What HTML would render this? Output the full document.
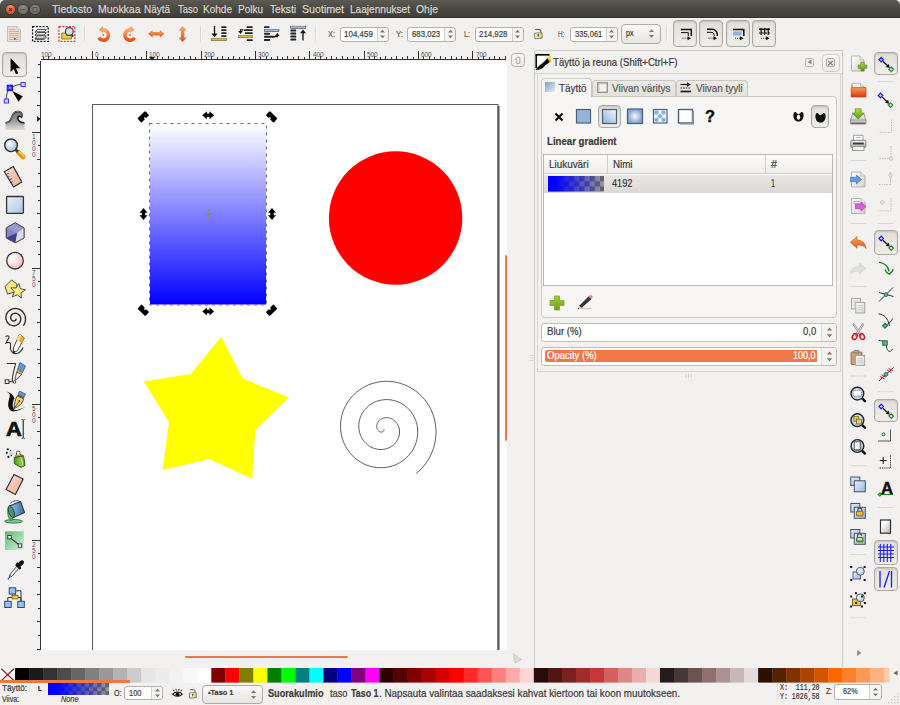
<!DOCTYPE html>
<html><head><meta charset="utf-8"><title>Inkscape</title>
<style>
*{box-sizing:border-box;margin:0;padding:0}
html,body{width:900px;height:705px;overflow:hidden;background:#f2f1f0;font-family:"Liberation Sans","DejaVu Sans",sans-serif;font-size:11px;color:#3c3b37}
.a{position:absolute}
#title{left:0;top:0;width:900px;height:18px;background:linear-gradient(#5b5952,#4a4843 50%,#403f3a 92%,#2f2e2b);border-radius:5px 5px 0 0}
.t{position:absolute;white-space:nowrap;transform-origin:0 0;display:block;-webkit-text-stroke-width:0.2px}
.wb{position:absolute;top:4.6px;width:9.8px;height:9.8px;border-radius:50%;box-shadow:0 0 0 0.7px rgba(40,38,34,.6)}
#canvas{left:41px;top:61px;width:466px;height:589px;background:#fff;overflow:hidden}
.lbl{position:absolute;white-space:nowrap}
.spin{position:absolute;background:#fff;border:1px solid #b5b1a9;border-radius:3px}
.spin span{position:absolute;left:4px;top:2px;font-size:9px;color:#3c3b37;letter-spacing:-0.3px}
.spin i{position:absolute;right:0;top:0;bottom:0;width:11px;border-left:1px solid #d5d2cc;background:#f5f4f2;border-radius:0 3px 3px 0}
.btn{position:absolute;border:1px solid #b0aca4;border-radius:4px;background:linear-gradient(#fbfbfa,#e6e4e1)}
.btnp{position:absolute;border:1px solid #aeaaa2;border-radius:4px;background:linear-gradient(#e2dfdb,#efeeeb);box-shadow:inset 0 1px 2px rgba(0,0,0,.15)}
.rl{position:absolute;font-size:6.5px;line-height:7px;color:#505060;letter-spacing:-0.1px}
.spin i svg{position:absolute;left:50%;top:50%;margin:-5px 0 0 -3.5px}
</style></head><body>
<!-- TITLE/MENU -->
<div id="title" class="a">
<div class="wb" style="left:5.6px;background:radial-gradient(circle at 50% 25%,#f79472,#e9562a 65%,#d94c22)"></div>
<div class="wb" style="left:17.8px;background:radial-gradient(circle at 50% 25%,#8d8b84,#6f6d67 70%)"></div>
<div class="wb" style="left:30.1px;background:radial-gradient(circle at 50% 25%,#8d8b84,#6f6d67 70%)"></div>
<svg class="a" style="left:0;top:0" width="45" height="18"><path d="M9 8L12 11M12 8L9 11" stroke="#5a2a18" stroke-width="1.1"/><path d="M20.7 9.6H24.7" stroke="#55534e" stroke-width="1.1"/><rect x="33" y="7.5" width="4" height="4" fill="none" stroke="#55534e" stroke-width="1.1"/></svg>
<span class="t" style="left:52.0px;top:4.3px;font-size:11.5px;line-height:11.5px;color:#dfdbd2;text-shadow:0 0 1px rgba(0,0,0,.5);-webkit-text-stroke:0.25px #dfdbd2;transform:scaleX(0.916);">Tiedosto</span><span class="t" style="left:97.5px;top:4.3px;font-size:11.5px;line-height:11.5px;color:#dfdbd2;text-shadow:0 0 1px rgba(0,0,0,.5);-webkit-text-stroke:0.25px #dfdbd2;transform:scaleX(0.911);">Muokkaa</span><span class="t" style="left:144.0px;top:4.3px;font-size:11.5px;line-height:11.5px;color:#dfdbd2;text-shadow:0 0 1px rgba(0,0,0,.5);-webkit-text-stroke:0.25px #dfdbd2;transform:scaleX(0.865);">Näytä</span><span class="t" style="left:177.5px;top:4.3px;font-size:11.5px;line-height:11.5px;color:#dfdbd2;text-shadow:0 0 1px rgba(0,0,0,.5);-webkit-text-stroke:0.25px #dfdbd2;transform:scaleX(0.823);">Taso</span><span class="t" style="left:203.0px;top:4.3px;font-size:11.5px;line-height:11.5px;color:#dfdbd2;text-shadow:0 0 1px rgba(0,0,0,.5);-webkit-text-stroke:0.25px #dfdbd2;transform:scaleX(0.872);">Kohde</span><span class="t" style="left:238.0px;top:4.3px;font-size:11.5px;line-height:11.5px;color:#dfdbd2;text-shadow:0 0 1px rgba(0,0,0,.5);-webkit-text-stroke:0.25px #dfdbd2;transform:scaleX(0.869);">Polku</span><span class="t" style="left:270.0px;top:4.3px;font-size:11.5px;line-height:11.5px;color:#dfdbd2;text-shadow:0 0 1px rgba(0,0,0,.5);-webkit-text-stroke:0.25px #dfdbd2;transform:scaleX(0.884);">Teksti</span><span class="t" style="left:302.0px;top:4.3px;font-size:11.5px;line-height:11.5px;color:#dfdbd2;text-shadow:0 0 1px rgba(0,0,0,.5);-webkit-text-stroke:0.25px #dfdbd2;transform:scaleX(0.925);">Suotimet</span><span class="t" style="left:350.0px;top:4.3px;font-size:11.5px;line-height:11.5px;color:#dfdbd2;text-shadow:0 0 1px rgba(0,0,0,.5);-webkit-text-stroke:0.25px #dfdbd2;transform:scaleX(0.877);">Laajennukset</span><span class="t" style="left:416.0px;top:4.3px;font-size:11.5px;line-height:11.5px;color:#dfdbd2;text-shadow:0 0 1px rgba(0,0,0,.5);-webkit-text-stroke:0.25px #dfdbd2;transform:scaleX(0.905);">Ohje</span>
</div>
<!-- TOOLBAR -->
<svg class="a" style="left:0px;top:18px" width="900" height="32" viewBox="0 18 900 32" ><defs><linearGradient id="og" x1="0" y1="0" x2="0" y2="1"><stop offset="0" stop-color="#f8a868"/><stop offset="1" stop-color="#e2551b"/></linearGradient><linearGradient id="blg" x1="0" y1="0" x2="0" y2="1"><stop offset="0" stop-color="#cfdcec"/><stop offset="1" stop-color="#7f9dc0"/></linearGradient><linearGradient id="ylg" x1="0" y1="0" x2="0" y2="1"><stop offset="0" stop-color="#f0d060"/><stop offset="1" stop-color="#c8a030"/></linearGradient></defs><path d="M7.5 26.5H17L20.5 30V41.5H7.5Z" fill="#ecdcd5" stroke="#c4c1bc" stroke-width="1"/><path d="M17 26.5V30H20.5Z" fill="#f6f5f3" stroke="#c4c1bc" stroke-width="0.8"/><path d="M9 29.5h6.5M9 31.5h10M9 33.5h10M9 35.5h10M9 37.5h10M9 39.5h10" stroke="#d3b0a2" stroke-width="1"/><rect x="14" y="38" width="1.6" height="2" fill="#7a6a65"/><rect x="32.6" y="26.6" width="15.6" height="14.8" fill="#fff" stroke="#111" stroke-width="1.3" stroke-dasharray="2 1.3"/><path d="M35.3 38.2L37.3 35.8H46.3L44.3 38.2ZM35.3 35L37.3 32.6H46.3L44.3 35ZM35.3 31.8L37.3 29.4H46.3L44.3 31.8Z" fill="#fff" stroke="#222" stroke-width="0.85" stroke-linejoin="round"/><path d="M35.3 38.2V39.4H44.3L46.3 37M35.3 35V36M35.3 31.8V32.8" stroke="#222" stroke-width="0.8" fill="none"/><rect x="59" y="26.6" width="15.8" height="14.8" fill="#fff" stroke="#e0353a" stroke-width="1.3" stroke-dasharray="2 1.3"/><path d="M61.7 33H66.5V35.5H71.5V39H61.7Z" fill="#f2cc3a" stroke="#7a6c44" stroke-width="0.9"/><path d="M71.5 34.5L73.3 36.6" stroke="#333" stroke-width="1.8"/><circle cx="69.3" cy="31.5" r="3.9" fill="#cfe0f0" stroke="#444" stroke-width="1.3"/><path d="M84.5 25V41" stroke="#dcd9d5" stroke-width="1"/><path d="M85.5 25V41" stroke="#fbfaf9" stroke-width="1"/><path d="M200.5 25V41" stroke="#dcd9d5" stroke-width="1"/><path d="M201.5 25V41" stroke="#fbfaf9" stroke-width="1"/><path d="M315.5 25V41" stroke="#dcd9d5" stroke-width="1"/><path d="M316.5 25V41" stroke="#fbfaf9" stroke-width="1"/><path d="M666.5 25V41" stroke="#dcd9d5" stroke-width="1"/><path d="M667.5 25V41" stroke="#fbfaf9" stroke-width="1"/><g transform="translate(103.3 35.0) scale(1 1)"><path d="M-0.53 -5.07A5.1 5.1 0 1 1 -4.42 2.55" fill="none" stroke="url(#og)" stroke-width="3.6"/><path d="M-0.3 -9L-4.6 -5.2L-0.3 -2Z" fill="#f6a362"/><circle cx="0" cy="0.1" r="1.05" fill="#ee7a3a"/></g><g transform="translate(130.0 35.0) scale(-1 1)"><path d="M-0.53 -5.07A5.1 5.1 0 1 1 -4.42 2.55" fill="none" stroke="url(#og)" stroke-width="3.6"/><path d="M-0.3 -9L-4.6 -5.2L-0.3 -2Z" fill="#f6a362"/><circle cx="0" cy="0.1" r="1.05" fill="#ee7a3a"/></g><path d="M148 33.7L152.6 29.8V32H159.8V29.8L164.4 33.7L159.8 37.6V35.4H152.6V37.6Z" fill="url(#og)"/><path d="M182.6 26L186.6 30.6H184.3V37.4H186.6L182.6 42L178.6 37.4H180.9V30.6H178.6Z" fill="url(#og)"/><path d="M214.5 26V35" stroke="#111" stroke-width="1.3"/><path d="M211.5 33.5H217.5L214.5 37.2Z" fill="#111"/><rect x="221.3" y="26.2" width="5.2" height="1.9" rx="0.6" fill="#222"/><rect x="221.3" y="29.2" width="5.2" height="1.9" rx="0.6" fill="#222"/><rect x="221.3" y="32.2" width="5.2" height="1.9" rx="0.6" fill="#222"/><rect x="221.3" y="35.2" width="5.2" height="1.9" rx="0.6" fill="#222"/><rect x="211.5" y="38.3" width="15" height="2.4" fill="url(#ylg)" stroke="#7a6a30" stroke-width="0.6"/><rect x="246.7" y="26.2" width="6.0" height="1.9" rx="0.6" fill="#222"/><rect x="244" y="29.2" width="8.699999999999989" height="1.9" rx="0.6" fill="#222"/><rect x="246.7" y="39.2" width="6.0" height="1.9" rx="0.6" fill="#222"/><rect x="245" y="32.2" width="7.7" height="1.9" rx="0.6" fill="#222"/><rect x="238.3" y="35.3" width="14.2" height="2.4" fill="url(#ylg)" stroke="#7a6a30" stroke-width="0.6"/><path d="M243.5 29.8H240.5V32" stroke="#111" stroke-width="1.2" fill="none"/><path d="M238.2 31H242.8L240.5 34Z" fill="#111"/><rect x="264" y="26.2" width="5.5" height="1.9" rx="0.6" fill="#222"/><rect x="264.3" y="29.3" width="14.7" height="2.4" fill="url(#blg)" stroke="#44546a" stroke-width="0.6"/><rect x="264" y="32.8" width="6" height="1.9" rx="0.6" fill="#222"/><rect x="264" y="35.8" width="11" height="1.9" rx="0.6" fill="#222"/><rect x="264" y="39" width="6" height="1.9" rx="0.6" fill="#222"/><path d="M275 36.7H277.3V35" stroke="#111" stroke-width="1.2" fill="none"/><path d="M275 36H279.6L277.3 33Z" fill="#111"/><rect x="290.6" y="26.2" width="15.2" height="2.3" fill="url(#blg)" stroke="#44546a" stroke-width="0.6"/><rect x="290.4" y="29.6" width="5.8" height="1.9" rx="0.6" fill="#222"/><rect x="290.4" y="32.6" width="5.8" height="1.9" rx="0.6" fill="#222"/><rect x="290.4" y="35.6" width="5.8" height="1.9" rx="0.6" fill="#222"/><rect x="290.4" y="38.6" width="5.8" height="1.9" rx="0.6" fill="#222"/><path d="M303 32V40.6" stroke="#111" stroke-width="1.3"/><path d="M300 33.2H306L303 29.6Z" fill="#111"/><defs><linearGradient id="lkg" x1="0" y1="0" x2="1" y2="0.4"><stop offset="0.2" stop-color="#ffffff"/><stop offset="1" stop-color="#e8d048"/></linearGradient></defs><path d="M535.3 29.5H539.3C540.6 29.5 541 31 541 32.8" fill="none" stroke="#555" stroke-width="1.1"/><path d="M534.5 33.2L542 32.8L542.2 38.2L534.8 38.8Z" fill="url(#lkg)" stroke="#777" stroke-width="0.9" stroke-linejoin="round"/><path d="M537.4 34.3H539L538.5 36.8H537.9Z" fill="#333"/></svg>
<span class="t" style="left:328.0px;top:29.5px;font-size:9px;line-height:9px;color:#6a6965;transform:scaleX(0.822);">X:</span>
<div class="spin" style="left:340px;top:26.5px;width:48.5px;height:15.5px"><i style="width:11px"><svg width="7" height="10" viewBox="0 0 7 10"><path d="M1 3.6L3.5 0.8L6 3.6ZM1 6.4L3.5 9.2L6 6.4Z" fill="#7a7873"/></svg></i></div><span class="t" style="left:344.4px;top:29.7px;font-size:9px;line-height:9px;color:#3c3b37;transform:scaleX(0.888);">104,459</span>
<span class="t" style="left:396.0px;top:29.5px;font-size:9px;line-height:9px;color:#6a6965;transform:scaleX(0.873);">Y:</span>
<div class="spin" style="left:407px;top:26.5px;width:49px;height:15.5px"><i style="width:11px"><svg width="7" height="10" viewBox="0 0 7 10"><path d="M1 3.6L3.5 0.8L6 3.6ZM1 6.4L3.5 9.2L6 6.4Z" fill="#7a7873"/></svg></i></div><span class="t" style="left:411.8px;top:29.7px;font-size:9px;line-height:9px;color:#3c3b37;transform:scaleX(0.866);">683,023</span>
<span class="t" style="left:464.0px;top:29.5px;font-size:9px;line-height:9px;color:#6a6965;transform:scaleX(0.798);">L:</span>
<div class="spin" style="left:475px;top:26.5px;width:48.5px;height:15.5px"><i style="width:11px"><svg width="7" height="10" viewBox="0 0 7 10"><path d="M1 3.6L3.5 0.8L6 3.6ZM1 6.4L3.5 9.2L6 6.4Z" fill="#7a7873"/></svg></i></div><span class="t" style="left:479.3px;top:29.7px;font-size:9px;line-height:9px;color:#3c3b37;transform:scaleX(0.876);">214,928</span>
<span class="t" style="left:558.0px;top:29.5px;font-size:9px;line-height:9px;color:#6a6965;transform:scaleX(0.722);">H:</span>
<div class="spin" style="left:570px;top:26.5px;width:47.5px;height:15.5px"><i style="width:11px"><svg width="7" height="10" viewBox="0 0 7 10"><path d="M1 3.6L3.5 0.8L6 3.6ZM1 6.4L3.5 9.2L6 6.4Z" fill="#7a7873"/></svg></i></div><span class="t" style="left:574.7px;top:29.7px;font-size:9px;line-height:9px;color:#3c3b37;transform:scaleX(0.839);">335,061</span>
<div class="btn" style="left:621px;top:24px;width:40px;height:19.5px"></div>
<span class="t" style="left:626.0px;top:29.0px;font-size:9px;line-height:9px;color:#3c3b37;transform:scaleX(0.788);">px</span>
<svg class="a" style="left:648px;top:28.3px" width="7" height="11" viewBox="0 0 7 11" ><path d="M1 4L3.5 1.2L6 4ZM1 7L3.5 9.8L6 7Z" fill="#7a7873"/></svg>
<div class="btnp" style="left:673.3px;top:20.3px;width:24px;height:27px"></div>
<div class="btnp" style="left:699.4px;top:20.3px;width:24px;height:27px"></div>
<div class="btnp" style="left:725.7px;top:20.3px;width:24px;height:27px"></div>
<div class="btnp" style="left:752px;top:20.3px;width:24px;height:27px"></div>
<svg class="a" style="left:660px;top:18px" width="130" height="32" viewBox="660 18 130 32" ><path d="M681 29.6H691.3V36" fill="none" stroke="#111" stroke-width="1.5"/><path d="M681 32.6H688.3V36" fill="none" stroke="#111" stroke-width="1"/><path d="M682.5 38.2h5" stroke="#333" stroke-width="1" stroke-dasharray="1 1"/><path d="M687.5 36.2L691.1 38.2L687.5 40.2Z" fill="#111"/><path d="M707 29.3H712A5 5 0 0 1 717.2 34.5V36" fill="none" stroke="#111" stroke-width="1.5"/><path d="M707 32.3H711A3 3 0 0 1 714.2 35.3V36.2" fill="none" stroke="#111" stroke-width="1"/><path d="M708.5 38.2h5" stroke="#333" stroke-width="1" stroke-dasharray="1 1"/><path d="M713.5 36.2L717.1 38.2L713.5 40.2Z" fill="#111"/><path d="M733 29.6H743.8V36" fill="none" stroke="#111" stroke-width="1.5"/><rect x="733" y="31.5" width="8.5" height="4" fill="#8fb2dc"/><path d="M735 38.2h5" stroke="#333" stroke-width="1" stroke-dasharray="1 1"/><path d="M740 36.2L743.6 38.2L740 40.2Z" fill="#111"/><path d="M759 29.3H770" stroke="#111" stroke-width="1.6"/><path d="M759 33H770" stroke="#111" stroke-width="1.2" stroke-dasharray="2 1"/><path d="M761.2 28V35M764.7 28V35M768.2 28V35" stroke="#111" stroke-width="1.2"/><path d="M761 38.2h5" stroke="#333" stroke-width="1" stroke-dasharray="1 1"/><path d="M766 36.2L769.6 38.2L766 40.2Z" fill="#111"/></svg>
<!-- TOOLBOX -->
<div class="btnp" style="left:2.2px;top:51.8px;width:25.3px;height:25.4px"></div>
<svg class="a" style="left:0px;top:50px" width="31" height="600" viewBox="0 50 31 600" ><defs><linearGradient id="tw" x1="0" y1="0" x2="0" y2="1"><stop offset="0" stop-color="#707070"/><stop offset="0.5" stop-color="#9a9a9a"/><stop offset="1" stop-color="#dedede"/></linearGradient><radialGradient id="tlens" cx="0.4" cy="0.35"><stop offset="0" stop-color="#ffffff"/><stop offset="1" stop-color="#b4cbe6"/></radialGradient><linearGradient id="trect" x1="0" y1="0" x2="1" y2="1"><stop offset="0" stop-color="#eef3f9"/><stop offset="1" stop-color="#a9c3df"/></linearGradient><radialGradient id="tell" cx="0.35" cy="0.35" r="0.75"><stop offset="0" stop-color="#ffffff"/><stop offset="0.4" stop-color="#fde8ea"/><stop offset="1" stop-color="#f7b0ba"/></radialGradient><linearGradient id="tpink" x1="0" y1="0" x2="1" y2="1"><stop offset="0" stop-color="#fbe0d6"/><stop offset="1" stop-color="#f0a890"/></linearGradient><linearGradient id="tgrad" x1="0" y1="0" x2="1" y2="1"><stop offset="0" stop-color="#5cb86e"/><stop offset="1" stop-color="#d8f2de"/></linearGradient><linearGradient id="tcan" x1="0" y1="0" x2="1" y2="0"><stop offset="0" stop-color="#4a9a1c"/><stop offset="0.6" stop-color="#8ccc48"/><stop offset="1" stop-color="#5aa828"/></linearGradient><linearGradient id="tbuck" x1="0" y1="0" x2="1" y2="0"><stop offset="0" stop-color="#9cc4e8"/><stop offset="1" stop-color="#3a6a9c"/></linearGradient></defs><path d="M10.6 58.2V72L13.7 69L16 74.2L18.2 73.2L16 68.2H20.3Z" fill="#000"/><path d="M6.3 99C6.5 93 8 90 10 88M12.5 87C15 85.3 18 84.6 21 84.5" fill="none" stroke="#444" stroke-width="1"/><rect x="7.3" y="85.3" width="5.2" height="5.2" fill="#2a2aff" stroke="#1a1aff" stroke-width="1.2"/><rect x="8.7" y="86.7" width="2.4" height="2.4" fill="#8a8aff"/><rect x="21" y="82.5" width="4.2" height="4" fill="#d0d0ff" stroke="#3a3aff" stroke-width="1"/><rect x="4.3" y="99" width="4.2" height="4" fill="#d0d0ff" stroke="#3a3aff" stroke-width="1"/><path d="M12.3 91L22.7 96.3L18.5 101.8Z" fill="#000"/><path d="M5.5 123C9 122.5 11 120 12 116.5C13.2 112.5 16 111 19 111.5C22 112 23.3 115 21.5 117.3C20.5 116 18.8 115.8 18 117C17 119.5 19 122.5 24.5 123V130H5.5Z" fill="url(#tw)"/><path d="M5.5 123C9 122.5 11 120 12 116.5C13.2 112.5 16 111 19 111.5C22 112 23.3 115 21.5 117.3C20.5 116 18.8 115.8 18 117C17 119.5 19 122.5 24.5 123" fill="none" stroke="#111" stroke-width="1.5"/><path d="M5.5 123C9 122.5 11 120 12 116.5C13.2 112.5 16 111 19 111.5C22 112 23.3 115 21.5 117.3" fill="none" stroke="#eee" stroke-width="0.5"/><path d="M18.3 152.3L23.3 157" stroke="#e8930c" stroke-width="4.6" stroke-linecap="round"/><path d="M19 151.6L24 156.2" stroke="#fbd467" stroke-width="1.4" stroke-linecap="round"/><path d="M15 149L18 151.8" stroke="#444" stroke-width="3"/><circle cx="11" cy="145.3" r="6.3" fill="url(#tlens)" stroke="#333" stroke-width="1.4"/><path d="M4.3 171.7L13.3 166.6L21.8 182L13.6 187Z" fill="url(#tpink)" stroke="#333" stroke-width="1.2" stroke-linejoin="round"/><path d="M6.2 174.6L8.8 173.2M7.7 177.3L9.5 176.3M9.2 180L11.8 178.6M10.7 182.7L12.5 181.7" stroke="#333" stroke-width="0.9"/><rect x="6.6" y="196.5" width="16.8" height="16.8" rx="0.8" fill="url(#trect)" stroke="#333" stroke-width="1.3"/><path d="M15.3 222.8L24 227.9V238L15.3 242.7L6.3 238V227.9Z" fill="#8484c4" stroke="#555" stroke-width="1"/><path d="M15.3 222.8L24 227.9L17 233L6.3 227.9Z" fill="#9898d4"/><path d="M24 227.9V238L15.3 242.7L17 233Z" fill="#dcdcf4"/><path d="M6.3 238L15.3 242.7L17 233L9 236.5Z" fill="#3c3c8c"/><path d="M15.3 222.8L24 227.9V238L15.3 242.7L6.3 238V227.9Z" fill="none" stroke="#555" stroke-width="1"/><circle cx="15" cy="260.7" r="8.3" fill="url(#tell)" stroke="#333" stroke-width="1.3"/><path d="M11.5 280L17 284L15 292L7.5 294L5 286.5Z" fill="#f6e87a" stroke="#555" stroke-width="1" stroke-linejoin="round"/><polygon points="18.9,283.5 20.3,288.6 25.5,289.8 21.0,292.8 21.5,298.1 17.3,294.8 12.4,296.8 14.3,291.8 10.8,287.8 16.1,288.0" fill="#f8ec80" stroke="#555" stroke-width="1" stroke-linejoin="round"/><path d="M16.0 318.5L16.0 318.8L16.1 319.0L16.0 319.3L15.9 319.6L15.8 319.9L15.6 320.1L15.4 320.4L15.1 320.6L14.8 320.8L14.4 320.9L14.0 321.0L13.6 321.0L13.2 320.9L12.7 320.8L12.3 320.6L11.9 320.3L11.6 320.0L11.2 319.6L11.0 319.1L10.8 318.6L10.7 318.1L10.6 317.5L10.7 316.9L10.9 316.3L11.1 315.7L11.4 315.2L11.8 314.7L12.3 314.2L12.9 313.9L13.6 313.6L14.3 313.4L15.0 313.3L15.7 313.3L16.5 313.4L17.2 313.7L18.0 314.0L18.6 314.5L19.2 315.1L19.7 315.7L20.2 316.5L20.5 317.3L20.7 318.2L20.7 319.1L20.6 320.0L20.4 321.0L20.1 321.9L19.6 322.7L19.0 323.5L18.2 324.2L17.4 324.7L16.4 325.2L15.4 325.5L14.4 325.7L13.3 325.7L12.2 325.5L11.1 325.2L10.1 324.8L9.1 324.1L8.2 323.4L7.5 322.5L6.8 321.4L6.4 320.3L6.0 319.1L5.9 317.9L5.9 316.6L6.2 315.3L6.6 314.1L7.2 312.9L8.0 311.9L8.9 310.9L10.0 310.1L11.2 309.4L12.5 308.9L13.9 308.6L15.3 308.5L16.7 308.6L18.2 308.9L19.5 309.5L20.8 310.2L22.0 311.1L23.1 312.3L24.0 313.5L24.7 314.9L25.2 316.4L25.4 318.0L25.5 319.6L25.3 321.2L24.9 322.8L24.2 324.3L23.3 325.7" fill="none" stroke="#333" stroke-width="1.4"/><path d="M5.5 336.5C8 335.3 10 336 8.5 338.5L6 343C9 341.5 11.5 343 10.5 346C9.5 350 12.5 354.5 17 353.5C20 352.8 22 350 23 347.5" fill="none" stroke="#333" stroke-width="1.1"/><path d="M19.5 334.5L24.2 338L17.5 350.5L13.2 353.2L13.5 347.5Z" fill="#fff" stroke="#333" stroke-width="0.9" stroke-linejoin="round"/><path d="M19.5 334.5L24.2 338L21.5 343L16.8 339.5Z" fill="#f8a818"/><path d="M19.5 334.5L21.5 336L18.8 341L16.8 339.5Z" fill="#fde080"/><path d="M13.2 353.2L13.4 350L15.3 351.7Z" fill="#111"/><path d="M6.8 363.5H15.5C14.5 370 12 375 12.3 381" fill="none" stroke="#333" stroke-width="1.1"/><path d="M9 381.8H13" stroke="#333" stroke-width="1"/><rect x="5.2" y="379.8" width="3.7" height="3.7" fill="#fff" stroke="#333" stroke-width="1"/><circle cx="14.5" cy="382" r="1.3" fill="#fff" stroke="#333" stroke-width="0.9"/><path d="M20 362.5L25.5 366L22.5 372.5L17.5 369.5Z" fill="#5a9ad4" stroke="#2a5a8c" stroke-width="0.8"/><path d="M17.5 369.5L22.5 372.5L21.5 374.5L16.7 371.8Z" fill="#f0c040" stroke="#7a5a10" stroke-width="0.6"/><path d="M16.7 371.8L21.5 374.5L17.2 379L15.2 380.3L15.3 378Z" fill="#f4f4f4" stroke="#333" stroke-width="0.8"/><path d="M5.5 391.5C9 392 10.5 394 9.5 397.5C8 403 7 407 10.5 410.5C12 411.5 14 411.3 15.5 410.5C11.5 408 12.5 402 14.5 398C13 395 10 392 5.5 391.5Z" fill="#111"/><path d="M12 410C16 410.5 21 409.5 25.5 406.5C22 409.5 17 412 12 411Z" fill="#111"/><path d="M19.5 391L25.5 394L24 397.5L18 394.5Z" fill="#5a9ad4" stroke="#2a5a8c" stroke-width="0.7"/><path d="M18 394.5L24 397.5L23.5 398.8L17.5 395.8Z" fill="#d02020"/><path d="M17.5 395.8L23.5 398.8C23 403 19 406.5 14 408.5C14.5 403.5 15 399 17.5 395.8Z" fill="#f6d860" stroke="#333" stroke-width="0.9"/><path d="M14 408.5L19 401.5" stroke="#333" stroke-width="0.8"/><circle cx="19.3" cy="401" r="0.9" fill="#333"/><path d="M16.5 455V452.2C16.5 451.5 17 451.2 17.6 451.2H18.8C19.5 451.2 19.9 451.6 19.9 452.2V454.3L23.6 455.9" fill="#ddd" stroke="#444" stroke-width="0.9" stroke-linejoin="round"/><rect x="17.2" y="452" width="2.1" height="2" fill="#fff"/><path d="M15.5 455.1H21V456.7L15.5 456.9Z" fill="#f0c030" stroke="#8a6a10" stroke-width="0.5"/><path d="M14.3 457.3L23.6 455.9L25 465.4L21 467.4L14.3 463.5Z" fill="url(#tcan)" stroke="#2a4a14" stroke-width="0.9" stroke-linejoin="round"/><path d="M21.5 458.5L22.8 465.5" stroke="#c8f0a0" stroke-width="1"/><path d="M16 453.5L9 450.5V456Z" fill="#c8c8c8" opacity="0.6"/><circle cx="7.8" cy="449.2" r="1.05" fill="#111"/><circle cx="6.8" cy="452.7" r="1.05" fill="#111"/><circle cx="8.4" cy="456.9" r="1.05" fill="#111"/><circle cx="10.5" cy="450.4" r="0.65" fill="#111"/><circle cx="11.3" cy="455.5" r="0.65" fill="#111"/><path d="M14 474.5L23.2 479L15.4 494.5L6.1 489.5Z" fill="url(#tpink)" stroke="#333" stroke-width="1.2" stroke-linejoin="round"/><ellipse cx="13.5" cy="521.3" rx="9" ry="1.8" fill="#78c88a" stroke="#2a6a3a" stroke-width="0.8"/><path d="M8.5 507C7 511 7.5 517 10.5 520.5L13 519.5C11.5 515 11.5 511 12.5 508Z" fill="#58b070" stroke="#2a6a3a" stroke-width="0.7"/><path d="M9.5 506L20.5 501.5L24.5 512.5L13.5 517.5Z" fill="url(#tbuck)" stroke="#223a55" stroke-width="1.1" stroke-linejoin="round"/><ellipse cx="11.3" cy="511.6" rx="2.6" ry="5.9" transform="rotate(-20 11.3 511.6)" fill="#4a9a64" stroke="#223a55" stroke-width="0.9"/><path d="M10.5 503.5C12.5 500.5 18 499.8 20.3 501.8" fill="none" stroke="#444" stroke-width="0.9"/><rect x="5" y="531.3" width="18.8" height="18.7" fill="url(#tgrad)"/><path d="M9.5 537.2L20 545.6" stroke="#333" stroke-width="1.1"/><rect x="7.8" y="535.5" width="3.4" height="3.4" fill="#fff" stroke="#333" stroke-width="0.9"/><rect x="18.3" y="543.9" width="3.4" height="3.4" fill="#fff" stroke="#333" stroke-width="0.9"/><path d="M17 566L10 574.5L9 577.5L12 576.3L19 568Z" fill="#e8f0f8" stroke="#444" stroke-width="0.9"/><path d="M10 574.5L9 577.5L12 576.3Z" fill="#4a7ac8"/><path d="M8.3 577.3C7.3 578.5 7.5 579.8 8.6 579.8C9.7 579.8 9.8 578.5 8.3 577.3Z" fill="#3a6ac0"/><path d="M15.2 565.3L19.7 569.8L21.3 568.2L20.3 566.5C22.5 565.5 24.5 563.5 23.8 561.3C22.8 559.3 20 560 18.5 562.8L17 562.3Z" fill="#111"/><path d="M12.5 594V597M7.8 601V597.5H21V601M15 594V595.5" fill="none" stroke="#333" stroke-width="1"/><path d="M16 590.8H21V601" fill="none" stroke="#333" stroke-width="1"/><rect x="9.2" y="587.8" width="6.5" height="6.2" fill="#9cc0ec" stroke="#2a4a7c" stroke-width="1"/><rect x="12" y="595.6" width="6" height="3.3" fill="#f6cc30" stroke="#7a5a10" stroke-width="0.8"/><rect x="4.7" y="601.3" width="6.5" height="6.2" fill="#9cc0ec" stroke="#2a4a7c" stroke-width="1"/><rect x="17.8" y="601.3" width="6.5" height="6.2" fill="#9cc0ec" stroke="#2a4a7c" stroke-width="1"/></svg>
<span class="t" style="left:5.8px;top:419.0px;font-size:20.5px;line-height:20.5px;color:#111;font-weight:bold;-webkit-text-stroke:0.7px #111;transform:scaleX(1.067);">A</span>
<svg class="a" style="left:21px;top:419px" width="5" height="20" viewBox="0 0 5 20" ><path d="M0.5 0.5H1.5C2 0.5 2.2 1 2.2 1.5V18.5C2.2 19 2 19.5 1.5 19.5H0.5M4 0.5H3C2.5 0.5 2.3 1 2.3 1.5V18.5C2.3 19 2.5 19.5 3 19.5H4" fill="none" stroke="#333" stroke-width="0.8"/></svg>
<!-- RULERS -->
<div id="hruler" class="a" style="left:41px;top:50px;width:470px;height:12px"><svg class="a" style="left:0;top:0" width="470" height="12" viewBox="41 51 470 12" shape-rendering="crispEdges">
<path d="M41 60.5H506" stroke="#333" stroke-width="1"/>
<path d="M43.5 58V60M48.5 56.5V60M54.5 58V60M59.5 56.5V60M65.5 58V60M70.5 56.5V60M75.5 58V60M81.5 56.5V60M86.5 58V60M92.5 52V60M97.5 58V60M103.5 56.5V60M108.5 58V60M114.5 56.5V60M119.5 58V60M124.5 56.5V60M130.5 58V60M135.5 56.5V60M141.5 58V60M146.5 52V60M152.5 58V60M157.5 56.5V60M162.5 58V60M168.5 56.5V60M173.5 58V60M179.5 56.5V60M184.5 58V60M190.5 56.5V60M195.5 58V60M201.5 52V60M206.5 58V60M211.5 56.5V60M217.5 58V60M222.5 56.5V60M228.5 58V60M233.5 56.5V60M239.5 58V60M244.5 56.5V60M249.5 58V60M255.5 52V60M260.5 58V60M266.5 56.5V60M271.5 58V60M277.5 56.5V60M282.5 58V60M287.5 56.5V60M293.5 58V60M298.5 56.5V60M304.5 58V60M309.5 52V60M315.5 58V60M320.5 56.5V60M326.5 58V60M331.5 56.5V60M336.5 58V60M342.5 56.5V60M347.5 58V60M353.5 56.5V60M358.5 58V60M364.5 52V60M369.5 58V60M374.5 56.5V60M380.5 58V60M385.5 56.5V60M391.5 58V60M396.5 56.5V60M402.5 58V60M407.5 56.5V60M413.5 58V60M418.5 52V60M423.5 58V60M429.5 56.5V60M434.5 58V60M440.5 56.5V60M445.5 58V60M451.5 56.5V60M456.5 58V60M461.5 56.5V60M467.5 58V60M472.5 52V60M478.5 58V60M483.5 56.5V60M489.5 58V60M494.5 56.5V60M499.5 58V60M505.5 56.5V60" stroke="#333" stroke-width="1"/>
</svg>
<span class="rl" style="left:0px;top:1px">100</span>
<span class="rl" style="left:54px;top:1px">0</span>
<span class="rl" style="left:108px;top:1px">100</span>
<span class="rl" style="left:163px;top:1px">200</span>
<span class="rl" style="left:217px;top:1px">300</span>
<span class="rl" style="left:272px;top:1px">400</span>
<span class="rl" style="left:326px;top:1px">500</span>
<span class="rl" style="left:380px;top:1px">600</span>
<span class="rl" style="left:435px;top:1px">700</span>
<svg class="a" style="left:107.5px;top:6.5px" width="6" height="4"><path d="M0 0H6L3 3.5Z" fill="#222"/></svg></div>
<div id="vruler" class="a" style="left:30px;top:61px;width:12px;height:589px"><svg class="a" style="left:0;top:0" width="12" height="589" viewBox="30 61 12 589" shape-rendering="crispEdges">
<path d="M40.5 61V650" stroke="#333" stroke-width="1"/>
<path d="M38 64.5H40M36.5 77.5H40M38 91.5H40M36.5 105.5H40M38 118.5H40M32 132.5H40M38 145.5H40M36.5 159.5H40M38 173.5H40M36.5 186.5H40M38 200.5H40M36.5 213.5H40M38 227.5H40M36.5 241.5H40M38 254.5H40M32 268.5H40M38 281.5H40M36.5 295.5H40M38 309.5H40M36.5 322.5H40M38 336.5H40M36.5 349.5H40M38 363.5H40M36.5 377.5H40M38 390.5H40M32 404.5H40M38 417.5H40M36.5 431.5H40M38 445.5H40M36.5 458.5H40M38 472.5H40M36.5 485.5H40M38 499.5H40M36.5 513.5H40M38 526.5H40M32 540.5H40M38 553.5H40M36.5 567.5H40M38 581.5H40M36.5 594.5H40M38 608.5H40M36.5 621.5H40M38 635.5H40M36.5 649.5H40" stroke="#333" stroke-width="1"/>
</svg>
<span class="rl" style="left:2px;top:71.9px">1</span>
<span class="rl" style="left:2px;top:77.9px">0</span>
<span class="rl" style="left:2px;top:83.9px">0</span>
<span class="rl" style="left:2px;top:89.9px">0</span>
<span class="rl" style="left:2px;top:207.9px">7</span>
<span class="rl" style="left:2px;top:213.9px">5</span>
<span class="rl" style="left:2px;top:219.9px">0</span>
<span class="rl" style="left:2px;top:343.9px">5</span>
<span class="rl" style="left:2px;top:349.9px">0</span>
<span class="rl" style="left:2px;top:355.9px">0</span>
<span class="rl" style="left:2px;top:479.9px">2</span>
<span class="rl" style="left:2px;top:485.9px">5</span>
<span class="rl" style="left:2px;top:491.9px">0</span>
<svg class="a" style="left:7px;top:54.5px" width="4" height="6"><path d="M0 0V6L3.5 3Z" fill="#222"/></svg></div>
<!-- CANVAS -->
<div id="canvas" class="a"><svg class="a" style="left:0;top:0" width="466" height="589" viewBox="41 61 466 589">
<rect x="92.5" y="104.5" width="405.5" height="600" fill="#fff" stroke="#5a5a5a" stroke-width="1"/>
<rect x="497.5" y="106" width="2" height="600" fill="#555"/>
<defs><linearGradient id="g1" x1="0" y1="0" x2="0" y2="1"><stop offset="0" stop-color="#fff"/><stop offset="0.04" stop-color="#f6f6ff"/><stop offset="1" stop-color="#0000ff"/></linearGradient></defs>
<rect x="149.5" y="123.5" width="117" height="181.5" fill="url(#g1)"/>
<rect x="149.5" y="123.5" width="117" height="181.5" fill="none" stroke="#fff" stroke-width="1"/>
<rect x="149.5" y="123.5" width="117" height="181.5" fill="none" stroke="#707070" stroke-width="1" stroke-dasharray="3 4"/>
<path d="M204 213.5h9M208.5 209v9" stroke="#8a8a6a" stroke-width="1" fill="none"/>
<g transform="translate(208.2 115.3) rotate(0)"><path d="M-5.9 0L-1.3 -4V-1.7H1.3V-4L5.9 0L1.3 4V1.7H-1.3V4Z" fill="#000"/></g>
<g transform="translate(208.2 311.5) rotate(0)"><path d="M-5.9 0L-1.3 -4V-1.7H1.3V-4L5.9 0L1.3 4V1.7H-1.3V4Z" fill="#000"/></g>
<g transform="translate(143.5 214) rotate(90)"><path d="M-5.9 0L-1.3 -4V-1.7H1.3V-4L5.9 0L1.3 4V1.7H-1.3V4Z" fill="#000"/></g>
<g transform="translate(272 214) rotate(90)"><path d="M-5.9 0L-1.3 -4V-1.7H1.3V-4L5.9 0L1.3 4V1.7H-1.3V4Z" fill="#000"/></g>
<g transform="translate(143.3 116.8) scale(1 1)"><g transform="rotate(-45)"><path d="M-5.4 -2.9H4.6L5.6 -2L5.2 2.9H1.7L0.2 0.9L-1 2.9H-5.2L-5.6 2L-5.2 -2.9Z" fill="#000"/></g></g>
<g transform="translate(271.6 116.8) scale(-1 1)"><g transform="rotate(-45)"><path d="M-5.4 -2.9H4.6L5.6 -2L5.2 2.9H1.7L0.2 0.9L-1 2.9H-5.2L-5.6 2L-5.2 -2.9Z" fill="#000"/></g></g>
<g transform="translate(143.3 310.3) scale(1 -1)"><g transform="rotate(-45)"><path d="M-5.4 -2.9H4.6L5.6 -2L5.2 2.9H1.7L0.2 0.9L-1 2.9H-5.2L-5.6 2L-5.2 -2.9Z" fill="#000"/></g></g>
<g transform="translate(271.6 310.3) scale(-1 -1)"><g transform="rotate(-45)"><path d="M-5.4 -2.9H4.6L5.6 -2L5.2 2.9H1.7L0.2 0.9L-1 2.9H-5.2L-5.6 2L-5.2 -2.9Z" fill="#000"/></g></g>
<circle cx="395.6" cy="218" r="66.7" fill="#ff0000"/>
<polygon points="221.2,337 242.8,378.6 288.9,397.4 255.2,430.3 252.2,478.7 209.2,459 162.7,470 169.1,422 143.8,381.6 191,374" fill="#ffff00"/>
<path d="M383.7 429.1L383.8 429.3L383.9 429.4L383.9 429.6L384.0 429.8L384.0 430.0L384.0 430.2L383.9 430.4L383.9 430.6L383.8 430.7L383.7 430.9L383.6 431.1L383.4 431.3L383.3 431.4L383.1 431.6L382.9 431.7L382.6 431.8L382.4 431.9L382.1 432.0L381.9 432.1L381.6 432.1L381.3 432.1L381.0 432.1L380.6 432.0L380.3 431.9L380.0 431.8L379.7 431.7L379.4 431.5L379.1 431.3L378.8 431.1L378.5 430.8L378.2 430.6L377.9 430.2L377.7 429.9L377.5 429.5L377.3 429.1L377.1 428.7L377.0 428.3L376.8 427.8L376.8 427.4L376.7 426.9L376.7 426.4L376.7 425.9L376.8 425.4L376.9 424.8L377.0 424.3L377.2 423.8L377.4 423.2L377.6 422.7L377.9 422.2L378.3 421.7L378.6 421.2L379.0 420.8L379.5 420.3L380.0 419.9L380.5 419.5L381.1 419.2L381.7 418.8L382.3 418.6L382.9 418.3L383.6 418.1L384.3 417.9L385.0 417.8L385.8 417.7L386.5 417.7L387.3 417.7L388.1 417.8L388.9 417.9L389.6 418.1L390.4 418.4L391.2 418.7L391.9 419.0L392.7 419.4L393.4 419.9L394.1 420.4L394.8 420.9L395.4 421.6L396.0 422.2L396.6 422.9L397.1 423.7L397.6 424.5L398.1 425.3L398.4 426.2L398.8 427.1L399.1 428.0L399.3 429.0L399.4 430.0L399.5 431.0L399.6 432.0L399.5 433.0L399.4 434.1L399.3 435.1L399.0 436.2L398.7 437.2L398.3 438.2L397.9 439.2L397.3 440.2L396.7 441.2L396.1 442.1L395.4 443.0L394.6 443.9L393.7 444.7L392.8 445.4L391.9 446.1L390.8 446.8L389.8 447.4L388.7 447.9L387.5 448.3L386.3 448.7L385.1 449.0L383.8 449.3L382.6 449.4L381.3 449.5L380.0 449.5L378.6 449.4L377.3 449.2L376.0 448.9L374.7 448.6L373.4 448.1L372.1 447.6L370.9 447.0L369.7 446.3L368.5 445.5L367.4 444.7L366.3 443.7L365.3 442.7L364.3 441.6L363.4 440.5L362.5 439.2L361.8 438.0L361.1 436.6L360.5 435.2L360.0 433.8L359.5 432.3L359.2 430.8L359.0 429.3L358.8 427.7L358.8 426.1L358.8 424.5L359.0 422.9L359.2 421.3L359.6 419.8L360.1 418.2L360.6 416.6L361.3 415.1L362.1 413.6L363.0 412.2L363.9 410.8L365.0 409.5L366.1 408.2L367.4 407.0L368.7 405.8L370.1 404.8L371.6 403.8L373.1 402.9L374.7 402.1L376.4 401.4L378.1 400.9L379.9 400.4L381.7 400.0L383.5 399.8L385.3 399.6L387.2 399.6L389.1 399.7L391.0 399.9L392.8 400.3L394.7 400.7L396.5 401.3L398.3 402.0L400.1 402.8L401.8 403.8L403.5 404.8L405.1 406.0L406.7 407.2L408.1 408.6L409.5 410.1L410.8 411.6L412.0 413.3L413.1 415.0L414.1 416.8L415.0 418.7L415.8 420.6L416.4 422.6L417.0 424.7L417.4 426.7L417.6 428.9L417.7 431.0L417.7 433.2L417.6 435.3L417.3 437.5L416.9 439.6L416.3 441.8L415.7 443.9L414.8 445.9L413.9 447.9L412.8 449.9L411.5 451.8L410.2 453.6L408.7 455.4L407.2 457.0L405.5 458.6L403.7 460.1L401.8 461.4L399.8 462.7L397.7 463.8L395.6 464.8L393.3 465.6L391.1 466.3L388.7 466.9L386.4 467.3L384.0 467.6L381.5 467.7L379.1 467.7L376.7 467.5L374.2 467.2L371.8 466.7L369.4 466.0L367.0 465.2L364.7 464.3L362.4 463.1L360.2 461.9L358.1 460.5L356.0 459.0L354.1 457.3L352.2 455.5L350.5 453.6L348.9 451.5L347.4 449.4L346.0 447.2L344.8 444.8L343.7 442.4L342.8 439.9L342.0 437.4L341.4 434.7L340.9 432.1L340.6 429.4L340.5 426.7L340.6 424.0L340.8 421.2L341.2 418.5L341.8 415.8L342.5 413.1L343.4 410.5L344.5 407.9L345.8 405.4L347.2 403.0L348.8 400.6L350.5 398.3L352.3 396.2L354.4 394.1L356.5 392.2L358.8 390.4L361.2 388.8L363.7 387.3L366.3 385.9L368.9 384.7L371.7 383.7L374.5 382.9L377.4 382.2L380.4 381.7L383.4 381.4L386.4 381.3L389.4 381.4L392.4 381.7L395.4 382.1L398.4 382.8L401.3 383.6L404.2 384.7L407.1 385.9L409.8 387.3L412.5 388.9L415.1 390.6L417.6 392.5L419.9 394.6L422.2 396.8L424.3 399.2L426.2 401.7L428.0 404.3L429.7 407.1L431.1 409.9L432.4 412.9L433.5 415.9L434.4 419.1L435.1 422.2L435.6 425.5L435.9 428.7L436.1 432.0L435.9 435.3L435.6 438.6L435.1 441.9L434.4 445.2L433.4 448.4L432.3 451.6L431.0 454.6L429.4 457.7L427.7 460.6L425.8 463.4L423.7 466.1L421.4 468.7L418.9 471.1L416.3 473.4" fill="none" stroke="#333" stroke-width="0.8"/>
</svg></div>
<!-- DOCK -->
<div class="a" style="left:534px;top:50px;width:309px;height:617.5px;border:1px solid #cfccc6;border-right:0;border-bottom:0;border-radius:2px 0 0 0;background:#f2f1f0"></div>
<div class="a" style="left:842px;top:50px;width:1px;height:617px;background:#cfccc6"></div>
<div class="a" style="left:535px;top:73px;width:307px;height:1px;background:#d6d3ce"></div>
<div class="a" style="left:536.5px;top:74px;width:304.5px;height:297.5px;border:1px solid #d9d6d1;border-top:0"></div>
<svg class="a" style="left:534px;top:52px" width="20" height="20" viewBox="0 0 20 20" ><path d="M2.2 3V16L14 3Z" fill="#fff"/><path d="M1.5 2.8H15.5" stroke="#000" stroke-width="1.7"/><path d="M2.2 2.5V16" stroke="#000" stroke-width="1.5"/><path d="M1.5 17.7C4 17.8 7.5 17.6 9.5 15.2C11 13.3 13 12 16.8 9.5L14.2 5.2C11.5 8.5 9.5 10.5 7.5 12C5 13.5 3.2 16 1.5 17.7Z" fill="#050505"/><path d="M13.6 6L16.6 3.5L17.2 10L15.5 10.2Z" fill="#f8b020"/><path d="M13.6 6L16.6 3.5L16.8 6.5L14.6 7.6Z" fill="#f8e040"/></svg>
<span class="t" style="left:552.7px;top:56.7px;font-size:10.5px;line-height:10.5px;color:#3c3b37;transform:scaleX(0.916);">Täyttö ja reuna (Shift+Ctrl+F)</span>
<div class="a" style="left:804.5px;top:57.5px;width:9.5px;height:9px;border:1px solid #bdb9b2;border-radius:2px;background:#f5f4f2"></div>
<svg class="a" style="left:806px;top:59px" width="7" height="6" viewBox="0 0 7 6" ><path d="M5.5 0.5V5.5L1.5 3Z" fill="#8a8882"/></svg>
<div class="a" style="left:821.5px;top:53.5px;width:18px;height:18px;border:1px solid #cfccc6;border-radius:4px;background:linear-gradient(#fdfdfc,#f0efed)"></div>
<div class="a" style="left:825.5px;top:58px;width:9.5px;height:8.5px;border:1px solid #aaa7a0;border-radius:2px;background:#f5f4f2"></div>
<svg class="a" style="left:827px;top:59.5px" width="7" height="6" viewBox="0 0 7 6" ><path d="M1.2 0.8L5.8 5.2M5.8 0.8L1.2 5.2" stroke="#8a8882" stroke-width="1.5"/></svg>
<div class="a" style="left:592px;top:79.5px;width:84px;height:17px;border:1px solid #cbc8c2;border-bottom:0;border-radius:4px 4px 0 0;background:linear-gradient(#eceae7,#e3e1dd)"></div>
<div class="a" style="left:676px;top:79.5px;width:72px;height:17px;border:1px solid #cbc8c2;border-bottom:0;border-radius:4px 4px 0 0;background:linear-gradient(#eceae7,#e3e1dd)"></div>
<div class="a" style="left:540.5px;top:96px;width:296.5px;height:222px;border:1px solid #cbc8c2;border-radius:0 4px 4px 4px;background:#f7f6f5"></div>
<div class="a" style="left:540.5px;top:77.5px;width:51.5px;height:19.5px;border:1px solid #cbc8c2;border-bottom:0;border-radius:4px 4px 0 0;background:#f7f6f5"></div>
<svg class="a" style="left:544.5px;top:81.5px" width="10" height="10" viewBox="0 0 10 10" ><defs><linearGradient id="tfl" x1="0" y1="0" x2="1" y2="1"><stop offset="0" stop-color="#7f9fcb"/><stop offset="1" stop-color="#e8eef6"/></linearGradient></defs><rect x="0" y="0" width="10" height="10" fill="url(#tfl)"/></svg>
<span class="t" style="left:559.0px;top:82.9px;font-size:10.5px;line-height:10.5px;color:#3c3b37;transform:scaleX(0.942);">Täyttö</span>
<svg class="a" style="left:596.5px;top:82px" width="11" height="11" viewBox="0 0 11 11" ><rect x="0.75" y="0.75" width="9.5" height="9.5" fill="#f4f3f1" stroke="#8e8c87" stroke-width="1.3"/><path d="M2 9.3V2H9.3" fill="none" stroke="#cfccc6" stroke-width="1"/></svg>
<span class="t" style="left:611.5px;top:82.9px;font-size:10.5px;line-height:10.5px;color:#5a5955;transform:scaleX(0.949);">Viivan väritys</span>
<svg class="a" style="left:680px;top:82px" width="12" height="11" viewBox="0 0 12 11" ><path d="M0.5 2.5H8" stroke="#222" stroke-width="1.3"/><path d="M7 0.3L11 2.5L7 4.7Z" fill="#222"/><path d="M0.5 6H11" stroke="#222" stroke-width="1.1" stroke-dasharray="1.6 1"/><path d="M0.5 9.5H11" stroke="#222" stroke-width="1.8"/></svg>
<span class="t" style="left:696.2px;top:82.9px;font-size:10.5px;line-height:10.5px;color:#5a5955;transform:scaleX(0.943);">Viivan tyyli</span>
<svg class="a" style="left:553px;top:111px" width="12" height="12" viewBox="0 0 12 12" ><path d="M2.5 2.5L9.5 9.5M9.5 2.5L2.5 9.5" stroke="#111" stroke-width="2.2"/></svg>
<svg class="a" style="left:575px;top:108px" width="18" height="17" viewBox="0 0 18 17" ><rect x="1.5" y="1.5" width="14" height="13.5" fill="#93b3d9" stroke="#4b5f7a" stroke-width="1.2"/></svg>
<div class="btnp" style="left:597.5px;top:104.5px;width:23.5px;height:23.5px"></div>
<svg class="a" style="left:600px;top:107px" width="19" height="19" viewBox="0 0 19 19" ><defs><linearGradient id="pl1" x1="0" y1="1" x2="1" y2="0"><stop offset="0" stop-color="#8fb0d8"/><stop offset="1" stop-color="#f4f7fb"/></linearGradient></defs><rect x="2.5" y="2.5" width="14" height="14" fill="url(#pl1)" stroke="#4b5f7a" stroke-width="1.2"/></svg>
<svg class="a" style="left:625px;top:107px" width="20" height="19" viewBox="0 0 20 19" ><defs><radialGradient id="pr1"><stop offset="0" stop-color="#f4f7fb"/><stop offset="1" stop-color="#7fa3d2"/></radialGradient></defs><rect x="2.5" y="2" width="15" height="14.5" fill="url(#pr1)" stroke="#4b5f7a" stroke-width="1.2"/></svg>
<svg class="a" style="left:652px;top:108px" width="17" height="17" viewBox="0 0 17 17" ><rect x="1.5" y="1.5" width="13.5" height="13.5" fill="#fff" stroke="#4b5f7a" stroke-width="1.2"/><circle cx="4.5" cy="4.5" r="2.3" fill="#8fb0d8"/><circle cx="11.5" cy="4.5" r="2.3" fill="#8fb0d8"/><circle cx="8" cy="8.2" r="2.3" fill="#8fb0d8"/><circle cx="4.5" cy="11.8" r="2.3" fill="#8fb0d8"/><circle cx="11.5" cy="11.8" r="2.3" fill="#8fb0d8"/></svg>
<svg class="a" style="left:676.5px;top:108px" width="18" height="17" viewBox="0 0 18 17" ><rect x="1.5" y="1.5" width="14" height="13.5" fill="#fff" stroke="#4b5f7a" stroke-width="1.4"/><path d="M3 15.5H16V3" fill="none" stroke="#7f8ea3" stroke-width="2"/></svg>
<span class="t" style="left:704.6px;top:109.0px;font-size:16px;line-height:16px;color:#111;font-weight:bold;-webkit-text-stroke:0.4px #111;transform:scaleX(1.022);">?</span>
<svg class="a" style="left:792px;top:110px" width="13" height="13" viewBox="0 0 13 13" ><path d="M2 2.5C3 1.5 4.2 2 4.6 3.2L6.5 4.2L8.4 3.2C8.8 2 10 1.5 11 2.5C12.3 5 11.5 9.5 9 11C7.5 11.8 5.5 11.8 4 11C1.5 9.5 0.7 5 2 2.5Z" fill="#111"/><ellipse cx="6.5" cy="7.2" rx="1.7" ry="2.6" fill="#f7f6f5"/></svg>
<div class="btnp" style="left:810.5px;top:104.5px;width:18.5px;height:23.5px"></div>
<svg class="a" style="left:814px;top:110.5px" width="13" height="13" viewBox="0 0 13 13" ><path d="M2 2.5C3 1.5 4.2 2 4.6 3.2L6.5 4.2L8.4 3.2C8.8 2 10 1.5 11 2.5C12.3 5 11.5 9.5 9 11C7.5 11.8 5.5 11.8 4 11C1.5 9.5 0.7 5 2 2.5Z" fill="#111"/></svg>
<span class="t" style="left:547.0px;top:136.7px;font-size:10px;line-height:10px;color:#3c3b37;font-weight:bold;transform:scaleX(0.962);">Linear gradient</span>
<div class="a" style="left:543px;top:154px;width:290px;height:131.5px;border:1px solid #bdb9b2;background:#fff"></div>
<div class="a" style="left:544px;top:155px;width:288px;height:19px;background:linear-gradient(#fcfcfb,#efeeec);border-bottom:1px solid #d2cfca"></div>
<div class="a" style="left:607px;top:155px;width:1px;height:19px;background:#d2cfca"></div><div class="a" style="left:765px;top:155px;width:1px;height:19px;background:#d2cfca"></div>
<span class="t" style="left:548.7px;top:159.7px;font-size:10px;line-height:10px;color:#3c3b37;transform:scaleX(0.989);">Liukuväri</span>
<span class="t" style="left:612.7px;top:159.7px;font-size:10px;line-height:10px;color:#3c3b37;transform:scaleX(0.975);">Nimi</span>
<span class="t" style="left:770.5px;top:159.7px;font-size:10px;line-height:10px;color:#3c3b37;transform:scaleX(1.079);">#</span>
<div class="a" style="left:544px;top:174.5px;width:288px;height:18px;background:linear-gradient(#e9e7e4,#dcd9d5)"></div>
<svg class="a" style="left:548px;top:176px" width="56" height="15.5" viewBox="0 0 56 15.5" ><defs><linearGradient id="gp548" x1="0" y1="0" x2="1" y2="0"><stop offset="0" stop-color="#0000ff"/><stop offset="0.12" stop-color="#0000ff"/><stop offset="1" stop-color="#0000ff" stop-opacity="0"/></linearGradient><pattern id="ck548" width="10.4" height="10.4" patternUnits="userSpaceOnUse"><rect width="10.4" height="10.4" fill="#9a9a9a"/><rect width="5.2" height="5.2" fill="#666"/><rect x="5.2" y="5.2" width="5.2" height="5.2" fill="#666"/></pattern></defs><rect width="56" height="15.5" fill="url(#ck548)"/><rect width="56" height="15.5" fill="url(#gp548)"/></svg>
<span class="t" style="left:612.0px;top:179.3px;font-size:10px;line-height:10px;color:#3c3b37;transform:scaleX(0.921);">4192</span>
<span class="t" style="left:770.5px;top:179.3px;font-size:10px;line-height:10px;color:#3c3b37;transform:scaleX(0.719);">1</span>
<svg class="a" style="left:548.5px;top:294.5px" width="16" height="16" viewBox="0 0 16 16" ><defs><linearGradient id="gpl" x1="0" y1="0" x2="0" y2="1"><stop offset="0" stop-color="#a8d040"/><stop offset="1" stop-color="#6a9a18"/></linearGradient></defs><path d="M5.5 1H10.5V5.5H15V10.5H10.5V15H5.5V10.5H1V5.5H5.5Z" fill="url(#gpl)" stroke="#7aa822" stroke-width="0.8" stroke-linejoin="round"/></svg>
<svg class="a" style="left:575.5px;top:293.5px" width="18" height="17" viewBox="0 0 18 17" ><ellipse cx="10" cy="14.5" rx="6" ry="1" fill="#d8d6d2"/><path d="M3 12L12.5 2.5L15.5 5L5.5 14Z" fill="#333"/><path d="M12.5 2.5L14 1.2C15 0.6 16.8 2.2 16.5 3.4L15.5 5Z" fill="#e080b0"/><path d="M3 12L5.5 14L1.5 15.5Z" fill="#e8d090"/><path d="M1.5 15.5L2.3 13.8L3.3 14.8Z" fill="#222"/></svg>
<div class="a" style="left:541px;top:323px;width:296px;height:18.5px;border:1px solid #c2beb7;border-radius:3px;background:#fff"></div>
<div class="a" style="left:821px;top:324px;width:15px;height:16.5px;border-left:1px solid #dcd9d5;background:#f5f4f2;border-radius:0 3px 3px 0"></div>
<svg class="a" style="left:825.5px;top:327px" width="7" height="11" viewBox="0 0 7 11" ><path d="M0.8 3.6L3.5 0.6L6.2 3.6ZM0.8 7.2L3.5 10.2L6.2 7.2Z" fill="#7a7873"/></svg>
<span class="t" style="left:546.7px;top:327.1px;font-size:10px;line-height:10px;color:#3c3b37;transform:scaleX(0.963);">Blur (%)</span>
<span class="t" style="left:802.8px;top:327.1px;font-size:10px;line-height:10px;color:#3c3b37;transform:scaleX(0.949);">0,0</span>
<div class="a" style="left:541px;top:347px;width:296px;height:18.5px;border:1px solid #c2beb7;border-radius:3px;background:#fff"></div>
<div class="a" style="left:821px;top:348px;width:15px;height:16.5px;border-left:1px solid #dcd9d5;background:#f5f4f2;border-radius:0 3px 3px 0"></div>
<svg class="a" style="left:825.5px;top:351px" width="7" height="11" viewBox="0 0 7 11" ><path d="M0.8 3.6L3.5 0.6L6.2 3.6ZM0.8 7.2L3.5 10.2L6.2 7.2Z" fill="#7a7873"/></svg>
<div class="a" style="left:545px;top:350px;width:272px;height:12.3px;background:#f07746;border-radius:2.5px 0 0 2.5px"></div>
<span class="t" style="left:547.2px;top:350.9px;font-size:10px;line-height:10px;color:#fff;transform:scaleX(0.953);">Opacity (%)</span>
<span class="t" style="left:793.4px;top:350.9px;font-size:10px;line-height:10px;color:#fff;transform:scaleX(0.903);">100,0</span>
<svg class="a" style="left:685px;top:374px" width="8" height="4" viewBox="0 0 8 4" ><path d="M1 0.5V3.5M3.5 0.5V3.5M6 0.5V3.5" stroke="#d0cdc8" stroke-width="1"/></svg>
<svg class="a" style="left:529px;top:354px" width="5" height="9" viewBox="0 0 5 9" ><path d="M0.5 1.5H4.5M0.5 4H4.5M0.5 6.5H4.5" stroke="#d8d5d0" stroke-width="1"/></svg>
<!-- CMDBAR -->
<svg class="a" style="left:843px;top:50px" width="30" height="617" viewBox="843 50 30 617" ><defs><linearGradient id="docg" x1="0" y1="0" x2="1" y2="1"><stop offset="0" stop-color="#ffffff"/><stop offset="1" stop-color="#d4d4d2"/></linearGradient><linearGradient id="grn" x1="0" y1="0" x2="0" y2="1"><stop offset="0" stop-color="#b4dc50"/><stop offset="1" stop-color="#5c9414"/></linearGradient><linearGradient id="fold" x1="0" y1="0" x2="0" y2="1"><stop offset="0" stop-color="#f89a50"/><stop offset="1" stop-color="#d83a18"/></linearGradient><linearGradient id="drv" x1="0" y1="0" x2="0" y2="1"><stop offset="0" stop-color="#f2f2f0"/><stop offset="1" stop-color="#b0b0ae"/></linearGradient><linearGradient id="og2" x1="0" y1="0" x2="0" y2="1"><stop offset="0" stop-color="#f8a860"/><stop offset="1" stop-color="#e05a18"/></linearGradient><linearGradient id="bsq" x1="0" y1="0" x2="1" y2="1"><stop offset="0" stop-color="#e6eef8"/><stop offset="1" stop-color="#9fbbdc"/></linearGradient><radialGradient id="lens" cx="0.4" cy="0.35"><stop offset="0" stop-color="#ffffff"/><stop offset="1" stop-color="#b8cde6"/></radialGradient></defs><path d="M851.5 56H860.0L864.0 60V71H851.5Z" fill="url(#docg)" stroke="#b4b4b0" stroke-width="1"/><path d="M860.0 56V60H864.0" fill="#f0f0ee" stroke="#b4b4b0" stroke-width="0.8"/><path d="M858.2 65H860.9V62.3H864.1V65H866.8V68.2H864.1V70.9H860.9V68.2H858.2Z" fill="url(#grn)" stroke="#5a8a18" stroke-width="0.7" stroke-linejoin="round"/><path d="M852 83.3H860.5L864 86.5V95H852Z" fill="#f6f6f4" stroke="#b4b4b0" stroke-width="0.9"/><path d="M860.5 83.3V86.5H864" fill="none" stroke="#b4b4b0" stroke-width="0.7"/><rect x="851.2" y="84.5" width="1.8" height="3" fill="#f0a050"/><path d="M851.2 87.6H866V97H851.2Z" fill="url(#fold)" stroke="#c8421a" stroke-width="0.7"/><path d="M852.5 114L850.5 120V124H866V120L864 114Z" fill="url(#drv)" stroke="#8a8a88" stroke-width="0.8"/><rect x="851" y="120" width="14.5" height="3.8" fill="#c8c8c6" stroke="#8a8a88" stroke-width="0.6"/><rect x="851.5" y="122.6" width="13.5" height="1.2" fill="#555"/><path d="M855.2 108.8H861.2V113H864.3L858.2 119L852.1 113H855.2Z" fill="url(#grn)" stroke="#5a8a18" stroke-width="0.7"/><path d="M853.5 140V135.3H863V140" fill="#fafafa" stroke="#999" stroke-width="0.9"/><path d="M856 137.5h4.5" stroke="#aaa" stroke-width="0.8"/><rect x="850.8" y="140.3" width="15" height="7.2" rx="1" fill="url(#drv)" stroke="#777" stroke-width="0.9"/><rect x="852.8" y="142.6" width="11" height="1.9" fill="#3a3a3a"/><rect x="863.6" y="145.3" width="1.2" height="1" fill="#5ac040"/><rect x="852.5" y="146.5" width="11.5" height="4" fill="#f4f4f4" stroke="#888" stroke-width="0.8"/><path d="M850 160.5H866" stroke="#dcd9d5" stroke-width="1"/><path d="M851.5 172H861.0L865.0 176V187H851.5Z" fill="url(#docg)" stroke="#b4b4b0" stroke-width="1"/><path d="M861.0 172V176H865.0" fill="#f0f0ee" stroke="#b4b4b0" stroke-width="0.8"/><path d="M850.5 177.3H856.5V175L861.5 179.5L856.5 184V181.7H850.5Z" fill="#5fa0dc" stroke="#3a78b8" stroke-width="0.7"/><path d="M851.5 198.5H861.0L865.0 202.5V213.5H851.5Z" fill="url(#docg)" stroke="#b4b4b0" stroke-width="1"/><path d="M861.0 198.5V202.5H865.0" fill="#f0f0ee" stroke="#b4b4b0" stroke-width="0.8"/><path d="M853 201.5h7M853 203.5h8" stroke="#d0a090" stroke-width="0.9"/><path d="M855.5 204.3H861V202L866 206.5L861 211V208.7H855.5Z" fill="#d860d0" stroke="#b040a8" stroke-width="0.7"/><path d="M850 223.5H866" stroke="#dcd9d5" stroke-width="1"/><path d="M850.2 242.2L857 236.6V240C861.5 240 865.6 242.6 866 248.5C864.3 245.8 861.5 244.8 857 245V248.2Z" fill="url(#og2)" stroke="#d85a18" stroke-width="0.6"/><path d="M866 268.5L859.2 263V266.4C854.7 266.4 850.6 269 850.2 274.5C851.9 272 854.7 271 859.2 271.3V274.4Z" fill="#dcdedb" stroke="#cfd1ce" stroke-width="0.6"/><path d="M850 286.5H866" stroke="#dcd9d5" stroke-width="1"/><rect x="851.5" y="298.5" width="9" height="10.5" fill="url(#docg)" stroke="#a0a09c" stroke-width="0.9"/><path d="M853 301h6M853 303h6M853 305h6" stroke="#c8c8c4" stroke-width="0.7"/><rect x="855.8" y="302.5" width="9" height="10.5" fill="url(#docg)" stroke="#a0a09c" stroke-width="0.9"/><path d="M857.3 305.5h6M857.3 307.5h6M857.3 309.5h6" stroke="#c0c0bc" stroke-width="0.7"/><path d="M853.8 324.3L861 335.3M863 324.3L855.8 335.3" stroke="#8a8a8a" stroke-width="2.2" stroke-linecap="round"/><path d="M853.8 324.3L861 335.3M863 324.3L855.8 335.3" stroke="#e4e4e4" stroke-width="1" stroke-linecap="round"/><ellipse cx="854.7" cy="336.6" rx="2.2" ry="3" fill="none" stroke="#d0282c" stroke-width="1.6" transform="rotate(28 854.7 336.6)"/><ellipse cx="862.1" cy="336.6" rx="2.2" ry="3" fill="none" stroke="#d0282c" stroke-width="1.6" transform="rotate(-28 862.1 336.6)"/><rect x="851" y="352" width="11" height="12.5" rx="1" fill="#c8a070" stroke="#8a6a40" stroke-width="0.8"/><rect x="854" y="350.3" width="5" height="2.6" rx="0.8" fill="#aaa" stroke="#666" stroke-width="0.6"/><rect x="855.7" y="355.5" width="9" height="10" fill="url(#docg)" stroke="#9a9a96" stroke-width="0.8"/><path d="M857.2 358.3h6M857.2 360.3h6M857.2 362.3h6" stroke="#c0c0bc" stroke-width="0.7"/><path d="M850 376H866" stroke="#dcd9d5" stroke-width="1"/><path d="M862.4 398.70000000000005L864.9 401.1" stroke="#111" stroke-width="2.5" stroke-linecap="round"/><circle cx="857.4" cy="393.6" r="6.4" fill="url(#lens)" stroke="#1c2430" stroke-width="1.4"/><rect x="853.2" y="390.4" width="8.4" height="5.6" fill="#fff" stroke="#555" stroke-width="0.8" stroke-dasharray="1.2 0.8"/><path d="M862.4 425.3L864.9 427.7" stroke="#111" stroke-width="2.5" stroke-linecap="round"/><circle cx="857.4" cy="420.2" r="6.4" fill="url(#lens)" stroke="#1c2430" stroke-width="1.4"/><rect x="853.8" y="416.6" width="4.6" height="4.6" fill="#f0c830" stroke="#6a5a20" stroke-width="0.7"/><rect x="856.6" y="419.2" width="4.8" height="4.8" fill="#f4d050" stroke="#6a5a20" stroke-width="0.7"/><path d="M862.4 451.1L864.9 453.5" stroke="#111" stroke-width="2.5" stroke-linecap="round"/><circle cx="857.4" cy="446" r="6.4" fill="url(#lens)" stroke="#1c2430" stroke-width="1.4"/><rect x="854.2" y="441.8" width="6" height="8" fill="#f4f4f4" stroke="#444" stroke-width="0.9"/><path d="M860.8 443.2V450.4H855.4" stroke="#777" stroke-width="0.9" fill="none"/><path d="M850 465.7H866" stroke="#dcd9d5" stroke-width="1"/><rect x="850.8" y="477" width="9" height="8.5" fill="url(#bsq)" stroke="#44546a" stroke-width="1"/><rect x="854.3" y="480.8" width="11" height="11" fill="url(#bsq)" stroke="#44546a" stroke-width="1"/><rect x="850.8" y="503.5" width="9" height="8.5" fill="url(#bsq)" stroke="#44546a" stroke-width="1"/><rect x="854.3" y="507.3" width="11" height="11" fill="url(#bsq)" stroke="#44546a" stroke-width="1"/><path d="M857.7 511.5V510.2A2.1 2.1 0 0 1 861.9 510.2V511.5" fill="none" stroke="#444" stroke-width="1.1"/><rect x="856.6" y="511.3" width="6.4" height="4.6" rx="0.6" fill="#f0b838" stroke="#6a4a10" stroke-width="0.8"/><rect x="850.8" y="529.5" width="9" height="8.5" fill="url(#bsq)" stroke="#44546a" stroke-width="1"/><rect x="854.3" y="533.3" width="11" height="11" fill="url(#bsq)" stroke="#44546a" stroke-width="1"/><path d="M857.5 537V535.8A2.1 2.1 0 0 1 861.7 535.8" fill="none" stroke="#444" stroke-width="1.1"/><rect x="856.6" y="537.5" width="6.4" height="4.4" rx="0.6" fill="#78b038" stroke="#3a5a10" stroke-width="0.8"/><rect x="857.6" y="538.3" width="4.4" height="1.5" fill="#f4f4e8"/><path d="M850 554.5H866" stroke="#dcd9d5" stroke-width="1"/><rect x="853" y="572" width="7.5" height="7" fill="url(#bsq)" stroke="#44546a" stroke-width="0.9"/><circle cx="860.3" cy="571.3" r="4" fill="url(#lens)" stroke="#44546a" stroke-width="0.9"/><rect x="850.2" y="566" width="2" height="2" fill="#111"/><rect x="863.6" y="566" width="2" height="2" fill="#111"/><rect x="850.2" y="579" width="2" height="2" fill="#111"/><rect x="863.6" y="579" width="2" height="2" fill="#111"/><rect x="852.5" y="599" width="8" height="6.5" fill="#f0c830" stroke="#6a5a20" stroke-width="0.9"/><circle cx="860.3" cy="597.8" r="4" fill="url(#lens)" stroke="#44546a" stroke-width="0.9"/><rect x="850.2" y="595.5" width="2" height="2" fill="#111"/><rect x="861" y="595.5" width="2" height="2" fill="#111"/><rect x="850.2" y="605.5" width="2" height="2" fill="#111"/><rect x="861" y="605.5" width="2" height="2" fill="#111"/><rect x="855" y="592.2" width="2" height="2" fill="#111"/><rect x="863.8" y="592.2" width="2" height="2" fill="#111"/><rect x="855" y="602" width="2" height="2" fill="#111"/><rect x="863.8" y="602" width="2" height="2" fill="#111"/><path d="M850 617.7H866" stroke="#e2dfdb" stroke-width="1"/><path d="M857.2 650V656L861.4 653Z" fill="#8a8883"/></svg><div class="btnp" style="left:874px;top:52.3px;width:23.5px;height:23px"></div>
<div class="btnp" style="left:874px;top:230px;width:23.5px;height:24.5px"></div>
<div class="btnp" style="left:874px;top:398.8px;width:23.5px;height:23.5px"></div>
<div class="btnp" style="left:874px;top:540px;width:23.5px;height:24.5px"></div>
<div class="btnp" style="left:874px;top:567px;width:23.5px;height:23.5px"></div>
<svg class="a" style="left:872px;top:50px" width="28" height="560" viewBox="872 50 28 560" ><path d="M881.2 57.400000000000006L883.5 59.7L881.2 62.0L878.9000000000001 59.7Z" fill="#c8c8ff" stroke="#1a1aff" stroke-width="1.2"/><path d="M883.0 61.5L888.0 66.1" stroke="#111" stroke-width="1.3"/><path d="M889.8000000000001 67.9L885.8000000000001 66.9L888.8000000000001 63.9Z" fill="#111"/><path d="M891.2 67.0L893.5 69.3L891.2 71.6L888.9000000000001 69.3Z" fill="#c8d8ff" stroke="#2a8a2a" stroke-width="1.2"/><path d="M878 81.5H894" stroke="#dcd9d5" stroke-width="1"/><path d="M880.5 93.2L882.8 95.5L880.5 97.8L878.2 95.5Z" fill="#c8c8ff" stroke="#1a1aff" stroke-width="1.2"/><path d="M882.3 97.3L887.3 101.89999999999999" stroke="#111" stroke-width="1.3"/><path d="M889.1 103.7L885.1 102.7L888.1 99.7Z" fill="#111"/><path d="M890.5 102.8L892.8 105.1L890.5 107.39999999999999L888.2 105.1Z" fill="#c8d8ff" stroke="#2a8a2a" stroke-width="1.2"/><path d="M891.5 119.5V132.3H879" fill="none" stroke="#c4c2be" stroke-width="1" stroke-dasharray="1.5 1"/><path d="M891 146V158.5H878.5" fill="none" stroke="#c4c2be" stroke-width="1" stroke-dasharray="1.5 1"/><circle cx="891" cy="158.5" r="1.8" fill="#e4e2de" stroke="#c4c2be" stroke-width="0.8"/><path d="M890.5 172V184.5H878" fill="none" stroke="#c4c2be" stroke-width="1" stroke-dasharray="1.5 1"/><path d="M890.5 172.2L892.2 175.5L890.5 178.8L888.8 175.5Z" fill="#e4e2de" stroke="#c4c2be" stroke-width="0.8"/><path d="M891 198V210.8H878.5" fill="none" stroke="#c4c2be" stroke-width="1" stroke-dasharray="1.5 1"/><circle cx="882.3" cy="202.5" r="1.8" fill="#e8e6e2" stroke="#c4c2be" stroke-width="0.8"/><path d="M878 223.5H894" stroke="#dcd9d5" stroke-width="1"/><path d="M881.2 236.2L883.5 238.5L881.2 240.8L878.9000000000001 238.5Z" fill="#c8c8ff" stroke="#1a1aff" stroke-width="1.2"/><path d="M883.0 240.3L888.0 244.9" stroke="#111" stroke-width="1.3"/><path d="M889.8000000000001 246.70000000000002L885.8000000000001 245.70000000000002L888.8000000000001 242.70000000000002Z" fill="#111"/><path d="M891.2 245.8L893.5 248.10000000000002L891.2 250.40000000000003L888.9000000000001 248.10000000000002Z" fill="#c8d8ff" stroke="#2a8a2a" stroke-width="1.2"/><path d="M879 262.3C884 262.8 888 265.5 889 271.5" fill="none" stroke="#1a7a1a" stroke-width="1.3"/><path d="M885 269.5C886 272 887.5 273.5 889.2 274.2C891 273 892.8 271 893.3 269" fill="none" stroke="#1a7a1a" stroke-width="1.3"/><path d="M879 301.5L893 287.5M879 292.5L893.5 296.5" stroke="#333" stroke-width="1"/><circle cx="886" cy="294.6" r="1.9" fill="#6a9adc" stroke="#1a8a1a" stroke-width="1"/><path d="M878.5 313.8C884 314.5 888 318 889.5 326" fill="none" stroke="#333" stroke-width="1"/><path d="M883 325C888 325.5 891 322 892.5 318.5" fill="none" stroke="#333" stroke-width="1"/><path d="M885 323.40000000000003L887.4 325.8L885 328.2L882.6 325.8Z" fill="#7a9ae0" stroke="#1a8a1a" stroke-width="1.2"/><path d="M878.5 340.5C884 340.5 886 343 886.5 347C887 351 890 353.5 892.5 349" fill="none" stroke="#333" stroke-width="1"/><rect x="882.8" y="340.8" width="4.4" height="4.4" fill="#7a9ae0" stroke="#1a8a1a" stroke-width="1.1"/><path d="M879 381L893.5 367.5" stroke="#333" stroke-width="1"/><path d="M880 376.5L884.5 379M881.5 374.8L886 377.3M887 370L891.5 372.5M888.5 368.3L893 370.8" stroke="#d02020" stroke-width="1"/><circle cx="886" cy="374.3" r="1.9" fill="#6a9adc" stroke="#1a8a1a" stroke-width="1"/><path d="M878 391.7H894" stroke="#dcd9d5" stroke-width="1"/><path d="M881.2 404.2L883.5 406.5L881.2 408.8L878.9000000000001 406.5Z" fill="#c8c8ff" stroke="#1a1aff" stroke-width="1.2"/><path d="M883.0 408.3L888.0 412.90000000000003" stroke="#111" stroke-width="1.3"/><path d="M889.8000000000001 414.7L885.8000000000001 413.7L888.8000000000001 410.7Z" fill="#111"/><path d="M891.2 413.8L893.5 416.1L891.2 418.40000000000003L888.9000000000001 416.1Z" fill="#c8d8ff" stroke="#2a8a2a" stroke-width="1.2"/><path d="M890.5 429.5V441H878" fill="none" stroke="#555" stroke-width="1"/><circle cx="883.5" cy="434.3" r="1.5" fill="#b8d8ff" stroke="#1a8a1a" stroke-width="1"/><path d="M890.5 455.5V468H878.5" fill="none" stroke="#333" stroke-width="1" stroke-dasharray="1.3 0.9"/><path d="M879.8 460.5H886.6M883.2 457.2V463.8" stroke="#222" stroke-width="1.2"/><path d="M879.5 494.5H893" stroke="#1a8a1a" stroke-width="1"/><path d="M879.8 493.0L881.3 494.5L879.8 496.0L878.3 494.5Z" fill="#b8d8ff" stroke="#1a8a1a" stroke-width="1.2"/><path d="M878 507.5H894" stroke="#dcd9d5" stroke-width="1"/><defs><linearGradient id="pgb" x1="0" y1="0" x2="1" y2="1"><stop offset="0.3" stop-color="#fff"/><stop offset="1" stop-color="#b0b0ae"/></linearGradient></defs><rect x="880.5" y="520" width="10" height="13.2" fill="url(#pgb)" stroke="#333" stroke-width="1.2"/><path d="M880.3 544V562M883.8 544V562M887.3 544V562M890.8 544V562M878 547H894M878 550.5H894M878 554H894M878 557.5H894" stroke="#1a1aff" stroke-width="1.1"/><path d="M880 571V587.5M891.5 571V587.5M884 587.5L889.5 571" stroke="#1a1aff" stroke-width="1.3"/></svg>
<span class="t" style="left:881.3px;top:480.1px;font-size:16.5px;line-height:16.5px;color:#111;font-weight:bold;-webkit-text-stroke:0.5px #111;transform:scaleX(1.007);">A</span>
<!-- PALETTE -->
<svg class="a" style="left:0px;top:667.7px" width="890" height="15" viewBox="0 0 890 15" ><rect x="0" y="0" width="15.2" height="14.6" fill="#fff"/><path d="M1.3 0.8L14 12.6M14 0.8L1.3 12.6" stroke="#8a1414" stroke-width="1.2"/><rect x="15.05" y="0" width="14.32" height="14.6" fill="#000000"/><rect x="29.07" y="0" width="14.32" height="14.6" fill="#1a1a1a"/><rect x="43.09" y="0" width="14.32" height="14.6" fill="#333333"/><rect x="57.11" y="0" width="14.32" height="14.6" fill="#4d4d4d"/><rect x="71.13" y="0" width="14.32" height="14.6" fill="#666666"/><rect x="85.15" y="0" width="14.32" height="14.6" fill="#808080"/><rect x="99.17" y="0" width="14.32" height="14.6" fill="#999999"/><rect x="113.19" y="0" width="14.32" height="14.6" fill="#b3b3b3"/><rect x="127.21" y="0" width="14.32" height="14.6" fill="#cccccc"/><rect x="141.23" y="0" width="14.32" height="14.6" fill="#e6e6e6"/><rect x="155.25" y="0" width="14.32" height="14.6" fill="#ececec"/><rect x="169.27" y="0" width="14.32" height="14.6" fill="#f2f2f2"/><rect x="183.29" y="0" width="14.32" height="14.6" fill="#f9f9f9"/><rect x="197.31" y="0" width="14.32" height="14.6" fill="#ffffff"/><rect x="211.33" y="0" width="14.32" height="14.6" fill="#800000"/><rect x="225.35" y="0" width="14.32" height="14.6" fill="#ff0000"/><rect x="239.37" y="0" width="14.32" height="14.6" fill="#808000"/><rect x="253.39" y="0" width="14.32" height="14.6" fill="#ffff00"/><rect x="267.41" y="0" width="14.32" height="14.6" fill="#008000"/><rect x="281.43" y="0" width="14.32" height="14.6" fill="#00ff00"/><rect x="295.45" y="0" width="14.32" height="14.6" fill="#008080"/><rect x="309.47" y="0" width="14.32" height="14.6" fill="#00ffff"/><rect x="323.49" y="0" width="14.32" height="14.6" fill="#000080"/><rect x="337.51" y="0" width="14.32" height="14.6" fill="#0000ff"/><rect x="351.53" y="0" width="14.32" height="14.6" fill="#800080"/><rect x="365.55" y="0" width="14.32" height="14.6" fill="#ff00ff"/><rect x="379.57" y="0" width="14.32" height="14.6" fill="#2b0000"/><rect x="393.59" y="0" width="14.32" height="14.6" fill="#550000"/><rect x="407.61" y="0" width="14.32" height="14.6" fill="#800000"/><rect x="421.63" y="0" width="14.32" height="14.6" fill="#aa0000"/><rect x="435.65" y="0" width="14.32" height="14.6" fill="#d40000"/><rect x="449.67" y="0" width="14.32" height="14.6" fill="#ff0000"/><rect x="463.69" y="0" width="14.32" height="14.6" fill="#ff2a2a"/><rect x="477.71" y="0" width="14.32" height="14.6" fill="#ff5555"/><rect x="491.73" y="0" width="14.32" height="14.6" fill="#ff8080"/><rect x="505.75" y="0" width="14.32" height="14.6" fill="#ffaaaa"/><rect x="519.77" y="0" width="14.32" height="14.6" fill="#ffd5d5"/><rect x="533.79" y="0" width="14.32" height="14.6" fill="#280b0b"/><rect x="547.81" y="0" width="14.32" height="14.6" fill="#501616"/><rect x="561.83" y="0" width="14.32" height="14.6" fill="#782121"/><rect x="575.85" y="0" width="14.32" height="14.6" fill="#a02c2c"/><rect x="589.87" y="0" width="14.32" height="14.6" fill="#c83737"/><rect x="603.89" y="0" width="14.32" height="14.6" fill="#d35f5f"/><rect x="617.91" y="0" width="14.32" height="14.6" fill="#de8787"/><rect x="631.93" y="0" width="14.32" height="14.6" fill="#e9afaf"/><rect x="645.95" y="0" width="14.32" height="14.6" fill="#f4d7d7"/><rect x="659.97" y="0" width="14.32" height="14.6" fill="#241c1c"/><rect x="673.99" y="0" width="14.32" height="14.6" fill="#483737"/><rect x="688.01" y="0" width="14.32" height="14.6" fill="#6c5353"/><rect x="702.03" y="0" width="14.32" height="14.6" fill="#916f6f"/><rect x="716.05" y="0" width="14.32" height="14.6" fill="#ac9393"/><rect x="730.07" y="0" width="14.32" height="14.6" fill="#c8b7b7"/><rect x="744.09" y="0" width="14.32" height="14.6" fill="#e3dbdb"/><rect x="758.11" y="0" width="14.32" height="14.6" fill="#2b1100"/><rect x="772.13" y="0" width="14.32" height="14.6" fill="#552200"/><rect x="786.15" y="0" width="14.32" height="14.6" fill="#803300"/><rect x="800.17" y="0" width="14.32" height="14.6" fill="#aa4400"/><rect x="814.19" y="0" width="14.32" height="14.6" fill="#d45500"/><rect x="828.21" y="0" width="14.32" height="14.6" fill="#ff6600"/><rect x="842.23" y="0" width="14.32" height="14.6" fill="#ff7f2a"/><rect x="856.25" y="0" width="14.32" height="14.6" fill="#ff9955"/><rect x="870.27" y="0" width="14.32" height="14.6" fill="#ffb380"/><rect x="884.29" y="0" width="5.21" height="14.6" fill="#ffccaa"/></svg>
<div class="a" style="left:0;top:680.2px;width:129.5px;height:2.4px;background:#f07746"></div>
<svg class="a" style="left:892px;top:669px" width="7" height="8" viewBox="0 0 7 8" ><path d="M5.6 1.4V6.6L1.4 4Z" fill="#6a6863"/></svg>
<div class="a" style="left:511px;top:53.3px;width:13.7px;height:14px;border:1px solid #b6b3ad;border-radius:3.5px;background:linear-gradient(#fafaf9,#ebeae8)"></div>
<svg class="a" style="left:514px;top:56px" width="8" height="9" viewBox="0 0 8 9" ><path d="M1.4 3.2L3 1.2H5.8V7.4H2.8V3.6Z" fill="#fbfbfa" stroke="#a4a29c" stroke-width="0.9" stroke-linejoin="round"/></svg>
<svg class="a" style="left:511px;top:652px" width="12" height="13" viewBox="0 0 12 13" ><path d="M2 1.5L10.5 7.5L4 11.3Z" fill="#dcdad6" stroke="#cbc8c3" stroke-width="0.7"/></svg>
<div class="a" style="left:185px;top:656.2px;width:163.3px;height:1.8px;background:#f07746;border-radius:1px"></div>
<div class="a" style="left:505.2px;top:255px;width:1.8px;height:186px;background:#f07746;border-radius:1px"></div>
<!-- STATUS -->
<span class="t" style="left:2.0px;top:683.9px;font-size:8.5px;line-height:8.5px;color:#3c3b37;transform:scaleX(0.962);">Täyttö:</span>
<span class="t" style="left:37.5px;top:684.8px;font-size:7.5px;line-height:7.5px;color:#222;font-weight:bold;transform:scaleX(0.827);">L</span>
<span class="t" style="left:2.0px;top:694.9px;font-size:8.5px;line-height:8.5px;color:#3c3b37;transform:scaleX(0.824);">Viiva:</span>
<svg class="a" style="left:48.3px;top:682.6px" width="61" height="12" viewBox="0 0 61 12" ><defs><linearGradient id="gp48" x1="0" y1="0" x2="1" y2="0"><stop offset="0" stop-color="#0000ff"/><stop offset="0.12" stop-color="#0000ff"/><stop offset="1" stop-color="#0000ff" stop-opacity="0"/></linearGradient><pattern id="ck48" width="8.2" height="8.2" patternUnits="userSpaceOnUse"><rect width="8.2" height="8.2" fill="#9a9a9a"/><rect width="4.1" height="4.1" fill="#666"/><rect x="4.1" y="4.1" width="4.1" height="4.1" fill="#666"/></pattern></defs><rect width="61" height="12" fill="url(#ck48)"/><rect width="61" height="12" fill="url(#gp48)"/></svg>
<span class="t" style="left:61.3px;top:694.9px;font-size:8.5px;line-height:8.5px;color:#3c3b37;font-style:italic;transform:scaleX(0.861);">None</span>
<span class="t" style="left:113.8px;top:688.5px;font-size:9px;line-height:9px;color:#3c3b37;transform:scaleX(0.788);">O:</span>
<div class="spin" style="left:124.3px;top:686.2px;width:38.7px;height:13.5px"><i style="width:10.5px"><svg width="7" height="10" viewBox="0 0 7 10"><path d="M1 3.6L3.5 0.8L6 3.6ZM1 6.4L3.5 9.2L6 6.4Z" fill="#7a7873"/></svg></i></div>
<span class="t" style="left:128.8px;top:688.5px;font-size:9px;line-height:9px;color:#3c3b37;transform:scaleX(0.832);">100</span>
<svg class="a" style="left:171.5px;top:687.5px" width="11" height="11" viewBox="0 0 11 11" ><path d="M0.8 6.2C3 3.2 8 3.2 10.2 6.2C8 9 3 9 0.8 6.2Z" fill="#fff" stroke="#111" stroke-width="1.1"/><circle cx="5.5" cy="6.2" r="2" fill="#111"/><path d="M2.2 3.3L1.2 1.6M4.3 2.6L3.9 0.8M6.7 2.6L7.1 0.8M8.8 3.3L9.8 1.6" stroke="#111" stroke-width="0.9"/></svg>
<svg class="a" style="left:188px;top:687.5px" width="10" height="11" viewBox="0 0 10 11" ><defs><linearGradient id="lkg2" x1="0" y1="0" x2="1" y2="0.4"><stop offset="0.2" stop-color="#ffffff"/><stop offset="1" stop-color="#e8d048"/></linearGradient></defs><path d="M2 1.7H5.6C6.8 1.7 7.2 3 7.2 4.6" fill="none" stroke="#555" stroke-width="1"/><path d="M1.3 5L8.2 4.6L8.4 9.6L1.6 10.2Z" fill="url(#lkg2)" stroke="#777" stroke-width="0.9" stroke-linejoin="round"/><path d="M4 6H5.5L5 8.3H4.5Z" fill="#333"/></svg>
<div class="btn" style="left:202px;top:685px;width:60.5px;height:18.5px"></div>
<span class="t" style="left:207.5px;top:689.4px;font-size:8px;line-height:8px;color:#3c3b37;font-weight:bold;transform:scaleX(0.925);">•Taso 1</span>
<svg class="a" style="left:250px;top:689.3px" width="7" height="11" viewBox="0 0 7 11" ><path d="M1 4L3.5 1.2L6 4ZM1 7L3.5 9.8L6 7Z" fill="#7a7873"/></svg>
<span class="t" style="left:268.3px;top:688.5px;font-size:10px;line-height:10px;color:#3c3b37;font-weight:bold;transform:scaleX(0.916);">Suorakulmio</span>
<span class="t" style="left:330.0px;top:688.5px;font-size:10px;line-height:10px;color:#3c3b37;transform:scaleX(0.926);">taso</span>
<span class="t" style="left:351.3px;top:688.5px;font-size:10px;line-height:10px;color:#3c3b37;font-weight:bold;transform:scaleX(0.889);">Taso 1</span>
<span class="t" style="left:378.8px;top:688.5px;font-size:10px;line-height:10px;color:#3c3b37;transform:scaleX(0.981);">. Napsauta valintaa saadaksesi kahvat kiertoon tai koon muutokseen.</span>
<div class="a" style="left:776.5px;top:683px;width:1px;height:17px;background:#e2dfdb"></div>
<span class="t" style="left:780.0px;top:683.9px;font-size:8.3px;line-height:8.3px;color:#3c3b37;font-family:'Liberation Mono','DejaVu Sans Mono',monospace;white-space:pre;transform:scaleX(0.795);">X:  111,20</span>
<span class="t" style="left:780.0px;top:692.8px;font-size:8.3px;line-height:8.3px;color:#3c3b37;font-family:'Liberation Mono','DejaVu Sans Mono',monospace;white-space:pre;transform:scaleX(0.795);">Y: 1026,58</span>
<span class="t" style="left:826.2px;top:686.8px;font-size:9px;line-height:9px;color:#3c3b37;transform:scaleX(0.750);">Z:</span>
<div class="spin" style="left:834.2px;top:684.4px;width:48px;height:15.2px"><i style="width:12.5px"><svg width="7" height="10" viewBox="0 0 7 10"><path d="M1 3.6L3.5 0.8L6 3.6ZM1 6.4L3.5 9.2L6 6.4Z" fill="#7a7873"/></svg></i></div>
<span class="t" style="left:842.6px;top:686.8px;font-size:9px;line-height:9px;color:#3c3b37;transform:scaleX(0.816);">62%</span>
<svg class="a" style="left:888px;top:692px" width="11" height="12" viewBox="0 0 11 12" ><rect x="9" y="1" width="1.3" height="1.3" fill="#c8c5c0"/><rect x="6" y="4" width="1.3" height="1.3" fill="#c8c5c0"/><rect x="9" y="4" width="1.3" height="1.3" fill="#c8c5c0"/><rect x="3" y="7" width="1.3" height="1.3" fill="#c8c5c0"/><rect x="6" y="7" width="1.3" height="1.3" fill="#c8c5c0"/><rect x="9" y="7" width="1.3" height="1.3" fill="#c8c5c0"/><rect x="0" y="10" width="1.3" height="1.3" fill="#c8c5c0"/><rect x="3" y="10" width="1.3" height="1.3" fill="#c8c5c0"/><rect x="6" y="10" width="1.3" height="1.3" fill="#c8c5c0"/><rect x="9" y="10" width="1.3" height="1.3" fill="#c8c5c0"/></svg>
</body></html>
